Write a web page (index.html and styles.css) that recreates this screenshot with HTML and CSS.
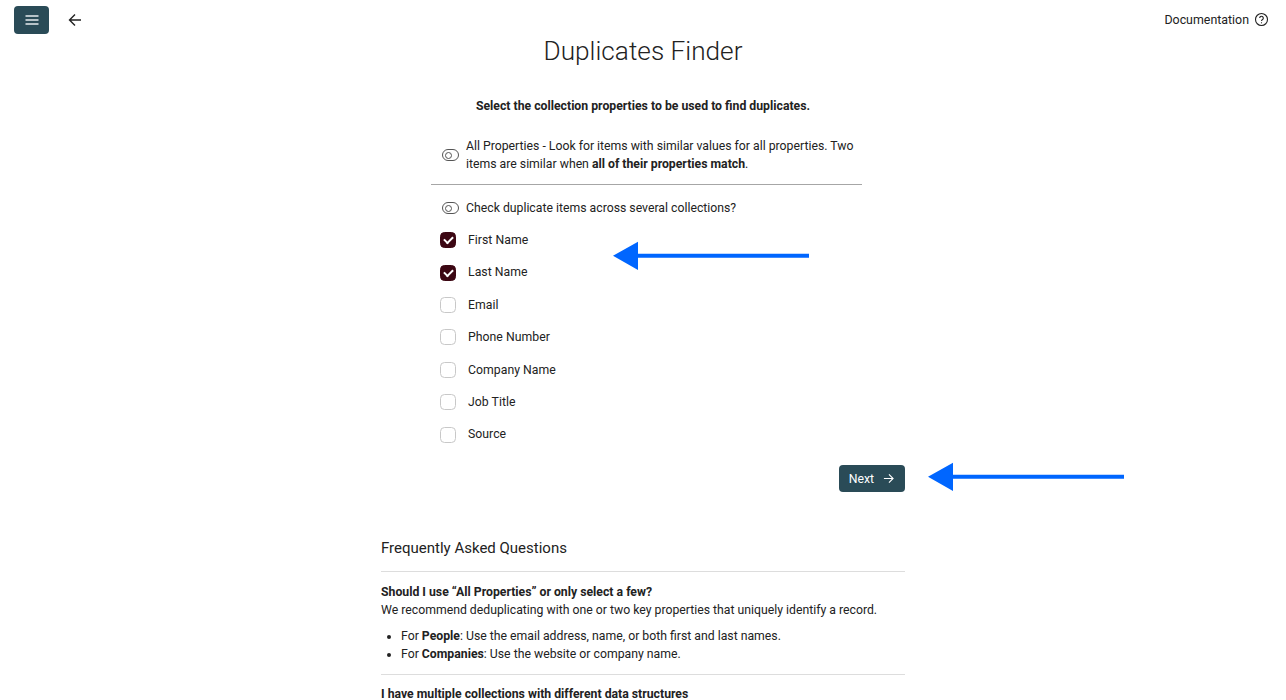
FILE: index.html
```html
<!DOCTYPE html>
<html lang="en">
<head>
  <meta charset="UTF-8">
  <meta name="viewport" content="width=device-width, initial-scale=1.0">
  <title>Duplicates Finder</title>
  <link rel="stylesheet" href="styles.css">
</head>
<body>
  <header class="topbar">
    <div class="topbar-left">
      <button class="menu-btn" aria-label="Menu">
        <svg width="14" height="14" viewBox="0 0 14 14" fill="none" stroke="#e6ecee" stroke-width="1.3"><path d="M.5 3h13M.5 7h13M.5 11h13"/></svg>
      </button>
      <svg class="back" width="16" height="16" viewBox="0 0 16 16" fill="none" stroke="#222" stroke-width="1.4"><path d="M14 8H2.500M8 2.500 2.500 8 8 13.500"/></svg>
    </div>
    <a href="#" class="doc-link">Documentation
      <svg width="15" height="15" viewBox="0 0 15 15" fill="none" stroke="#222" stroke-width="1.1"><circle cx="7.500" cy="7.500" r="6"/><path d="M5.700 6a1.800 1.800 0 1 1 2.800 1.500c-.6.4-1 .7-1 1.500"/><path d="M7.500 10.300v1"/></svg>
    </a>
  </header>

  <main class="page">
    <h1>Duplicates Finder</h1>
    <p class="lead">Select the collection properties to be used to find duplicates.</p>

    <div class="form">
      <div class="toggle-row all-props">
        <span class="toggle"></span>
        <span>All Properties - Look for items with similar values for all properties. Two items are similar when <b>all of their properties match</b>.</span>
      </div>
      <div class="toggle-row across">
        <span class="toggle"></span>
        <span>Check duplicate items across several collections?</span>
      </div>
      <ul class="props">
        <li><span class="check on"></span>First Name</li>
        <li><span class="check on"></span>Last Name</li>
        <li><span class="check"></span>Email</li>
        <li><span class="check"></span>Phone Number</li>
        <li><span class="check"></span>Company Name</li>
        <li><span class="check"></span>Job Title</li>
        <li><span class="check"></span>Source</li>
      </ul>
    </div>

    <div class="actions">
      <button class="next-btn">Next
        <svg width="11" height="11" viewBox="0 0 12 12" fill="none" stroke="#fff" stroke-width="1.2"><path d="M1 6h10M6.500 1.500 11 6l-4.500 4.500"/></svg>
      </button>
    </div>

    <section class="faq">
      <h2>Frequently Asked Questions</h2>
      <div class="faq-item">
        <h3>Should I use “All Properties” or only select a few?</h3>
        <p>We recommend deduplicating with one or two key properties that uniquely identify a record.</p>
        <ul>
          <li>For <b>People</b>: Use the email address, name, or both first and last names.</li>
          <li>For <b>Companies</b>: Use the website or company name.</li>
        </ul>
      </div>
      <div class="faq-item">
        <h3>I have multiple collections with different data structures</h3>
      </div>
    </section>
  </main>

  <!-- annotation arrows drawn over the page -->
  <svg class="callout callout-props" width="196" height="30" viewBox="0 0 196 30"><path d="M0 14.700 25 .7v12h171v4H25v12.300z" fill="#0066ff"/></svg>
  <svg class="callout callout-next" width="196" height="30" viewBox="0 0 196 30"><path d="M0 14.700 25 .7v12h171v4H25v12.300z" fill="#0066ff"/></svg>
</body>
</html>
```

FILE: styles.css
```css
* {
  margin: 0;
  padding: 0;
  box-sizing: border-box;
}

html, body {
  height: 700px;
  overflow: hidden;
}

body {
  background: #fff;
  color: #222;
  font-family: Roboto, "Liberation Sans", sans-serif;
  font-size: 12.25px;
}

.topbar {
  display: flex;
  justify-content: space-between;
  align-items: center;
  height: 40px;
  padding: 0 17px 0 14px;
}

.topbar-left {
  display: flex;
  align-items: center;
  gap: 18px;
}

.menu-btn {
  display: flex;
  justify-content: center;
  align-items: center;
  width: 35px;
  height: 28px;
  background: #2a4b57;
  border: none;
  border-radius: 4px;
}

.doc-link {
  display: flex;
  align-items: center;
  gap: 5px;
  margin-bottom: 1px;
  color: #222;
  font-size: 12.4px;
  text-decoration: none;
}

.page {
  width: 524px;
  margin: 0 auto;
}

h1 {
  font-size: 26.2px;
  font-weight: 300;
  line-height: 30px;
  text-align: center;
  margin-top: -4px;
}

.lead {
  font-weight: 700;
  line-height: 16px;
  text-align: center;
  margin-top: 32px;
}

.form {
  width: 431px;
  margin: 23px 0 0 50px;
}

.toggle-row {
  display: flex;
  align-items: center;
  gap: 7px;
  padding-left: 11px;
  line-height: 18px;
}

.all-props {
  padding-bottom: 11px;
  border-bottom: 1px solid #a6a6a6;
}

.across {
  margin-top: 14px;
}

.toggle {
  position: relative;
  flex: none;
  width: 17px;
  height: 11.500px;
  border: 1.500px solid #555;
  border-radius: 6px;
}

.toggle::before {
  content: "";
  position: absolute;
  left: 1.800px;
  top: 1.700px;
  width: 5px;
  height: 5px;
  border: 1.200px solid #555;
  border-radius: 50%;
}

.props {
  list-style: none;
  margin-top: 7px;
}

.props li {
  display: flex;
  align-items: center;
  gap: 12px;
  height: 32.400px;
  padding-left: 9px;
  padding-bottom: 0.500px;
  letter-spacing: 0.03px;
}

.check {
  position: relative;
  flex: none;
  width: 16px;
  height: 16px;
  margin-top: 0.500px;
  border: 1.500px solid #c8c8c8;
  border-radius: 4.500px;
}

.check.on {
  background: #3c0713;
  border-color: #3c0713;
}

.check.on::after {
  content: "";
  position: absolute;
  left: 2.800px;
  top: 3px;
  width: 7px;
  height: 4px;
  border-left: 2px solid #fff;
  border-bottom: 2px solid #fff;
  transform: rotate(-45deg);
}

.actions {
  display: flex;
  justify-content: flex-end;
  margin-top: 14px;
}

.next-btn {
  display: flex;
  align-items: center;
  gap: 9px;
  height: 27px;
  padding: 1px 11px 0 10px;
  background: #2a4b57;
  border: none;
  border-radius: 4px;
  color: #fff;
  font-family: inherit;
  font-size: 12.25px;
}

.faq {
  margin-top: 44px;
}

.faq h2 {
  font-size: 15px;
  font-weight: 400;
  line-height: 24px;
  padding-bottom: 11px;
  border-bottom: 1px solid #ddd;
}

.faq-item {
  padding-top: 11px;
  padding-bottom: 11px;
  border-bottom: 1px solid #ddd;
  line-height: 18px;
}

.faq-item:last-child {
  padding-top: 10px;
  border-bottom: none;
}

.faq-item h3 {
  font-size: 12.25px;
  font-weight: 700;
}

.faq-item ul {
  margin-top: 8px;
  padding-left: 20px;
}

.callout {
  position: absolute;
}

.callout-props {
  left: 613px;
  top: 241px;
}

.callout-next {
  left: 928px;
  top: 462px;
}
```
